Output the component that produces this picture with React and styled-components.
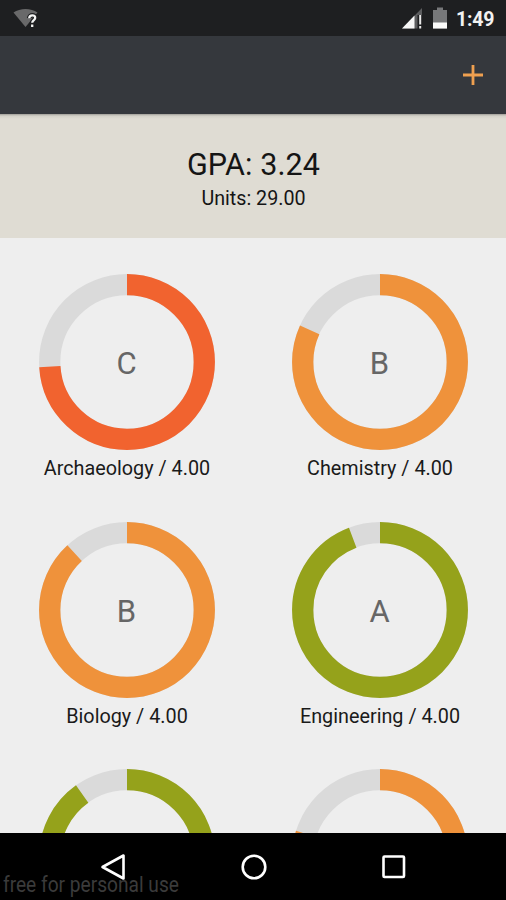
import React from "react";
import styled, { createGlobalStyle } from "styled-components";

const GlobalStyle = createGlobalStyle`
  * {
    box-sizing: border-box;
  }

  body {
    margin: 0;
    background: #000;
    font-family: Roboto, "Liberation Sans", sans-serif;
  }
`;

// ── Styles ──────────────────────────────────────────────────
const Screen = styled.div`
  display: flex;
  flex-direction: column;
  width: 506px;
  height: 900px;
  overflow: hidden;
  background: #eeeeee;
`;

const StatusBar = styled.header`
  display: flex;
  flex-shrink: 0;
  align-items: center;
  height: 36px;
  padding: 0 11px 0 13px;
  background: #1e1f21;
`;

const StatusRight = styled.div`
  display: flex;
  align-items: center;
  margin-left: auto;
`;

const Clock = styled.span`
  width: 39px;
  margin-left: 9px;
  padding-top: 3px;
  font-size: 19.5px;
  font-weight: 700;
  line-height: 33px;
  letter-spacing: -0.2px;
  white-space: nowrap;
  color: #f2f2f2;
`;

const SignalIcon = styled.svg`
  margin-right: 9px;
`;

const Toolbar = styled.div`
  display: flex;
  flex-shrink: 0;
  align-items: center;
  justify-content: flex-end;
  height: 78px;
  padding-right: 22px;
  background: #35383d;
`;

const AddButton = styled.button`
  display: flex;
  padding: 0;
  border: none;
  background: none;
  cursor: pointer;
`;

const Summary = styled.section`
  flex-shrink: 0;
  height: 124px;
  padding-top: 32px;
  text-align: center;
  color: #151515;
  background: linear-gradient(#a09e98 0, #d3d1c8 2px, #dfdcd3 5px);
`;

const Gpa = styled.div`
  padding-left: 1px;
  font-size: 30.5px;
  line-height: 38px;
  letter-spacing: 0.1px;
`;

const Units = styled.div`
  padding-left: 1px;
  font-size: 19.7px;
  line-height: 30px;
`;

const CourseGrid = styled.main`
  display: grid;
  flex: 1;
  grid-template-columns: 1fr 1fr;
  grid-auto-rows: 247.5px;
  min-height: 0;
  padding-top: 35px;
  overflow: hidden;
`;

const Course = styled.div`
  display: flex;
  flex-direction: column;
  align-items: center;
`;

const Ring = styled.svg`
  flex-shrink: 0;
`;

const Grade = styled.text`
  font-size: 31px;
  text-anchor: middle;
  fill: #666;
`;

const CourseLabel = styled.div`
  margin-top: 4px;
  padding-left: 1px;
  font-size: 19.8px;
  line-height: 28px;
  white-space: nowrap;
  color: #1a1a1a;
`;

const NavBar = styled.nav`
  position: relative;
  display: flex;
  flex-shrink: 0;
  align-items: center;
  justify-content: space-between;
  height: 67px;
  padding: 0 97px;
  background: #000;
`;

const NavButton = styled.button`
  display: flex;
  padding: 0;
  border: none;
  background: none;
  cursor: pointer;
`;

// Sits over the nav bar, partly under the back button
const Watermark = styled.span`
  position: absolute;
  left: 3px;
  bottom: 1px;
  font-size: 22px;
  line-height: 28px;
  white-space: nowrap;
  color: #3b3b3b;
  transform: scaleX(0.87);
  transform-origin: left;
`;

// ── Data ────────────────────────────────────────────────────
const RED = "#f1632f";
const ORANGE = "#ef923b";
const GREEN = "#95a21b";

const COURSES = [
  { name: "Archaeology", units: "4.00", grade: "C", score: 0.739, color: RED },
  { name: "Chemistry", units: "4.00", grade: "B", score: 0.817, color: ORANGE },
  { name: "Biology", units: "4.00", grade: "B", score: 0.88, color: ORANGE },
  { name: "Engineering", units: "4.00", grade: "A", score: 0.941, color: GREEN },
  { score: 0.9, color: GREEN },
  { score: 0.797, color: ORANGE },
];

const RADIUS = 77.3;
const LENGTH = 2 * Math.PI * RADIUS;

// ── Components ──────────────────────────────────────────────
const GradeRing = ({ grade, score, color }) => (
  <Ring width="177" height="178" viewBox="0 0 177 178">
    <g fill="none" strokeWidth="21.3" transform="rotate(-90 89 89)">
      <circle cx="89" cy="89" r={RADIUS} stroke="#dadada" />
      <circle
        cx="89"
        cy="89"
        r={RADIUS}
        stroke={color}
        strokeDasharray={`${LENGTH * score} ${LENGTH}`}
      />
    </g>
    {grade && (
      <Grade x="88.5" y="100.5">
        {grade}
      </Grade>
    )}
  </Ring>
);

const App = () => (
  <>
    <GlobalStyle />
    <Screen>
      <StatusBar>
        <svg width="26" height="22" viewBox="0 0 26 22">
          <path d="M0.5 5.5C7 0.8 18 0.8 24.5 5.5L12.5 20Z" fill="#69696a" />
          <path
            d="M16.2 11.2C16.4 7.3 22.4 7.4 22.2 11C22.1 13.2 19.3 13 19.2 15.8M19.2 17.6V20"
            fill="none"
            stroke="#1e1f21"
            strokeWidth="4.6"
          />
          <path
            d="M16.2 11.2C16.4 7.3 22.4 7.4 22.2 11C22.1 13.2 19.3 13 19.2 15.8M19.2 17.6V20"
            fill="none"
            stroke="#f4f4f4"
            strokeWidth="2.3"
          />
        </svg>
        <StatusRight>
          <SignalIcon width="22" height="22" viewBox="0 0 22 22">
            <path d="M20 1V21.5H0Z" fill="#5c5d5f" />
            <path d="M12.5 8.5V21.5H0Z" fill="#f7f7f7" />
            <path d="M15.5 8H21V22H15.5Z" fill="#1e1f21" />
            <path d="M17.2 8H19.2V17.5H17.2ZM17.2 19H19.2V21.5H17.2Z" fill="#e8e8e8" />
          </SignalIcon>
          <svg width="14" height="22" viewBox="0 0 14 22">
            <path d="M4 0.5H10V3H14V21.5H0V3H4Z" fill="#77787a" />
            <path d="M0 15.5H14V21.5H0Z" fill="#fafafa" />
          </svg>
          <Clock>1:49</Clock>
        </StatusRight>
      </StatusBar>

      <Toolbar>
        <AddButton aria-label="Add course">
          <svg width="22" height="22" viewBox="0 0 22 22">
            <path d="M11 1V21M1 11H21" stroke="#efa050" strokeWidth="2.8" />
          </svg>
        </AddButton>
      </Toolbar>

      <Summary>
        <Gpa>GPA: 3.24</Gpa>
        <Units>Units: 29.00</Units>
      </Summary>

      <CourseGrid>
        {COURSES.map(({ name, units, ...ring }, i) => (
          <Course key={i}>
            <GradeRing {...ring} />
            {name && (
              <CourseLabel>
                {name} / {units}
              </CourseLabel>
            )}
          </Course>
        ))}
      </CourseGrid>

      <NavBar>
        <Watermark>free for personal use</Watermark>
        <NavButton aria-label="Back">
          <svg width="32" height="30" viewBox="0 0 32 30">
            <path
              d="M26.5 3.5V26.5L5.5 15Z"
              fill="none"
              stroke="#fff"
              strokeWidth="2.6"
              strokeLinejoin="round"
            />
          </svg>
        </NavButton>
        <NavButton aria-label="Home">
          <svg width="30" height="30" viewBox="0 0 30 30">
            <circle
              cx="15"
              cy="15"
              r="11.3"
              fill="none"
              stroke="#fff"
              strokeWidth="2.6"
            />
          </svg>
        </NavButton>
        <NavButton aria-label="Recent apps">
          <svg width="30" height="30" viewBox="0 0 30 30">
            <rect
              x="4.5"
              y="4.5"
              width="20.5"
              height="20.5"
              rx="1"
              fill="none"
              stroke="#fff"
              strokeWidth="2.6"
            />
          </svg>
        </NavButton>
      </NavBar>
    </Screen>
  </>
);

export default App;
